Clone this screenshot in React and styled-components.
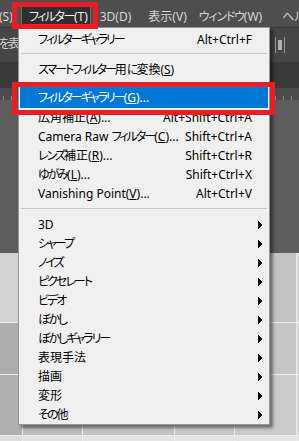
import React from "react";
import styled, { createGlobalStyle } from "styled-components";

const Global = createGlobalStyle`
  html, body {
    margin: 0;
    padding: 0;
    background: #5d5d5d;
  }
  body {
    font-family: "Noto Sans", "Noto Sans CJK JP", sans-serif;
    font-feature-settings: "palt";
  }
`;

const Screen = styled.div`
  position: relative;
  width: 299px;
  height: 441px;
  overflow: hidden;
  display: flex;
  flex-direction: column;
  background: #5d5d5d;
`;

const MenuBar = styled.div`
  height: 27px;
  flex: none;
  display: flex;
  align-items: flex-end;
  background: #4e4e4e;
  white-space: nowrap;
`;

const MenuTitle = styled.div`
  flex: none;
  height: 20px;
  margin-left: ${(p) => p.$ml || 0}px;
  padding: 0 ${(p) => (p.$active ? 2 : 7)}px 0 7px;
  border: 1px solid ${(p) => (p.$active ? "#6c6c6c" : "transparent")};
  border-bottom: none;
  background: ${(p) => (p.$active ? "#2f2f2f" : "transparent")};
  color: ${(p) => (p.$active ? "#f2f2f2" : "#d6d6d6")};
  font-size: 12px;
  line-height: 20px;
`;

const OptionsBar = styled.div`
  height: 35px;
  flex: none;
  display: flex;
  align-items: center;
  justify-content: space-between;
  background: #464646;
  border-top: 1px solid #3a3a3a;
  box-sizing: border-box;
  padding: 0 14px 0 0;
  color: #d0d0d0;
  font-size: 12px;
`;

const OptionLabel = styled.span`
  margin-left: -1px;
  margin-top: -4px;
`;

const TabBar = styled.div`
  height: 26px;
  flex: none;
  background: #393939;
`;

const Ruler = styled.div`
  height: 12px;
  flex: none;
  background-color: #4b4b4b;
  background-image: repeating-linear-gradient(
    90deg,
    transparent 0 3px,
    #8a8a8a 3px 4px,
    transparent 4px 8px
  );
  background-size: 100% 4px;
  background-position: bottom left;
  background-repeat: no-repeat;
`;

const Pasteboard = styled.div`
  height: 153px;
  flex: none;
  background: #5d5d5d;
`;

const DocGrid = styled.div`
  flex: 1;
  display: grid;
  grid-template-columns: 22px 59px 91px 59px 61px 1fr;
  grid-template-rows: 69px 51px 60px 1fr;
  gap: 1px;
  background: #ececec;
`;

const Tile = styled.div`
  background: ${(p) => p.$c};
`;

const DropMenu = styled.div`
  position: absolute;
  left: 18px;
  top: 27px;
  width: 252px;
  box-sizing: border-box;
  padding: 2px 0 0;
  background: #f0f0f0;
  border: 1px solid #979797;
  box-shadow: 3px 3px 3px rgba(0, 0, 0, 0.45);
  font-size: 12px;
  color: #000;
`;

const Item = styled.div`
  display: grid;
  grid-template-columns: 1fr auto 16px;
  align-items: center;
  height: ${(p) => (p.$selected ? 21 : 19)}px;
  line-height: ${(p) => (p.$selected ? 21 : 19)}px;
  margin: 0 1px;
  padding-left: 18px;
  background: ${(p) => (p.$selected ? "#0078d7" : "transparent")};
  color: ${(p) => (p.$selected ? "#fff" : "#000")};
  white-space: nowrap;
`;

const Shortcut = styled.span`
  text-align: right;
`;

const ArrowCell = styled.span`
  display: flex;
  align-items: center;
  padding-left: 6px;
`;

const Separator = styled.div`
  height: 1px;
  margin: ${(p) => p.$m || "4px 2px 6px"};
  background: #c8c8c8;
`;

const Kana = styled.span`
  letter-spacing: ${(p) => p.$ls}px;
`;

const Callout = styled.div`
  position: absolute;
  left: ${(p) => p.$x}px;
  top: ${(p) => p.$y}px;
  width: ${(p) => p.$w}px;
  height: ${(p) => p.$h}px;
  box-sizing: border-box;
  border: 5px solid #ec1c24;
`;

// narrow the kana runs, Meiryo UI sets them much tighter than Noto does
const jp = (text, ls = -2) =>
  text
    .split(/([\u3040-\u30ff]+)/)
    .map((part, i) =>
      /[\u3040-\u30ff]/.test(part) ? (
        <Kana key={i} $ls={ls}>
          {part}
        </Kana>
      ) : (
        part
      )
    );

const Arrow = () => (
  <svg width="4" height="8" viewBox="0 0 4 8" shapeRendering="crispEdges">
    <polygon points="0,0 4,4 0,8" fill="#000" />
  </svg>
);

const PanelIcon = () => (
  <svg width="10" height="16" viewBox="0 0 10 16">
    <rect x="0" y="0" width="1" height="16" fill="#9a9a9a" />
    <rect x="3" y="3" width="4" height="10" fill="#b0b0b0" />
    <rect x="9" y="0" width="1" height="16" fill="#9a9a9a" />
  </svg>
);

const tiles = [
  "#d3d3d3", "#cfcfcf", "#c8c8c8", "#c6c6c6", "#c4c4c4", "#d8d8d8",
  "#adadad", "#bdbdbd", "#c2c2c2", "#c4c4c4", "#c5c5c5", "#d6d6d6",
  "#b0b0b0", "#bcbcbc", "#c3c3c3", "#c8c8c8", "#cbcbcb", "#d6d6d6",
  "#dedede", "#e2e2e2", "#e4e4e4", "#e4e4e4", "#e4e4e4", "#e6e6e6",
];

const Row = ({ label, hot, tail = "", shortcut, sub, selected }) => (
  <Item $selected={selected}>
    <span>
      {jp(label)}
      {hot && (
        <>
          (<u>{hot}</u>){tail}
        </>
      )}
    </span>
    <Shortcut>{shortcut}</Shortcut>
    <ArrowCell>{sub && <Arrow />}</ArrowCell>
  </Item>
);

const topItems = [
  { label: "広角補正", hot: "A", shortcut: "Alt+Shift+Ctrl+A" },
  { label: "Camera Raw フィルター", hot: "C", shortcut: "Shift+Ctrl+A" },
  { label: "レンズ補正", hot: "R", shortcut: "Shift+Ctrl+R" },
  { label: "ゆがみ", hot: "L", shortcut: "Shift+Ctrl+X" },
  { label: "Vanishing Point", hot: "V", shortcut: "Alt+Ctrl+V" },
];

const subMenus = [
  "3D",
  "シャープ",
  "ノイズ",
  "ピクセレート",
  "ビデオ",
  "ぼかし",
  "ぼかしギャラリー",
  "表現手法",
  "描画",
  "変形",
  "その他",
];

const titles = [
  { t: "(S)", ml: -9 },
  { t: "フィルター(T)", active: true, ls: -1.5 },
  { t: "3D(D)", ml: 1 },
  { t: "表示(V)", ml: 1 },
  { t: "ウィンドウ(W)", ml: -4, ls: -1.2 },
  { t: "ヘルプ(H)", ml: 4 },
];

export default function App() {
  return (
    <Screen>
      <Global />
      <MenuBar>
        {titles.map((m) => (
          <MenuTitle key={m.t} $ml={m.ml} $active={m.active}>
            {jp(m.t, m.ls ?? 0)}
          </MenuTitle>
        ))}
      </MenuBar>
      <OptionsBar>
        <OptionLabel>{jp("を表示")}</OptionLabel>
        <PanelIcon />
      </OptionsBar>
      <TabBar />
      <Ruler />
      <Pasteboard />
      <DocGrid>
        {tiles.map((c, i) => (
          <Tile key={i} $c={c} />
        ))}
      </DocGrid>

      <DropMenu>
        <Row label="フィルターギャラリー" shortcut="Alt+Ctrl+F" />
        <Separator />
        <Row label="スマートフィルター用に変換" hot="S" />
        <Separator $m="3px 2px 4px" />
        <Row selected label="フィルターギャラリー" hot="G" tail="..." />
        {topItems.map((it) => (
          <Row key={it.label} {...it} tail="..." />
        ))}
        <Separator $m="5px 2px 6px" />
        {subMenus.map((s) => (
          <Row key={s} label={s} sub />
        ))}
      </DropMenu>

      <Callout $x={12} $y={2} $w={86} $h={27} />
      <Callout $x={12} $y={82} $w={263} $h={33} />
    </Screen>
  );
}
